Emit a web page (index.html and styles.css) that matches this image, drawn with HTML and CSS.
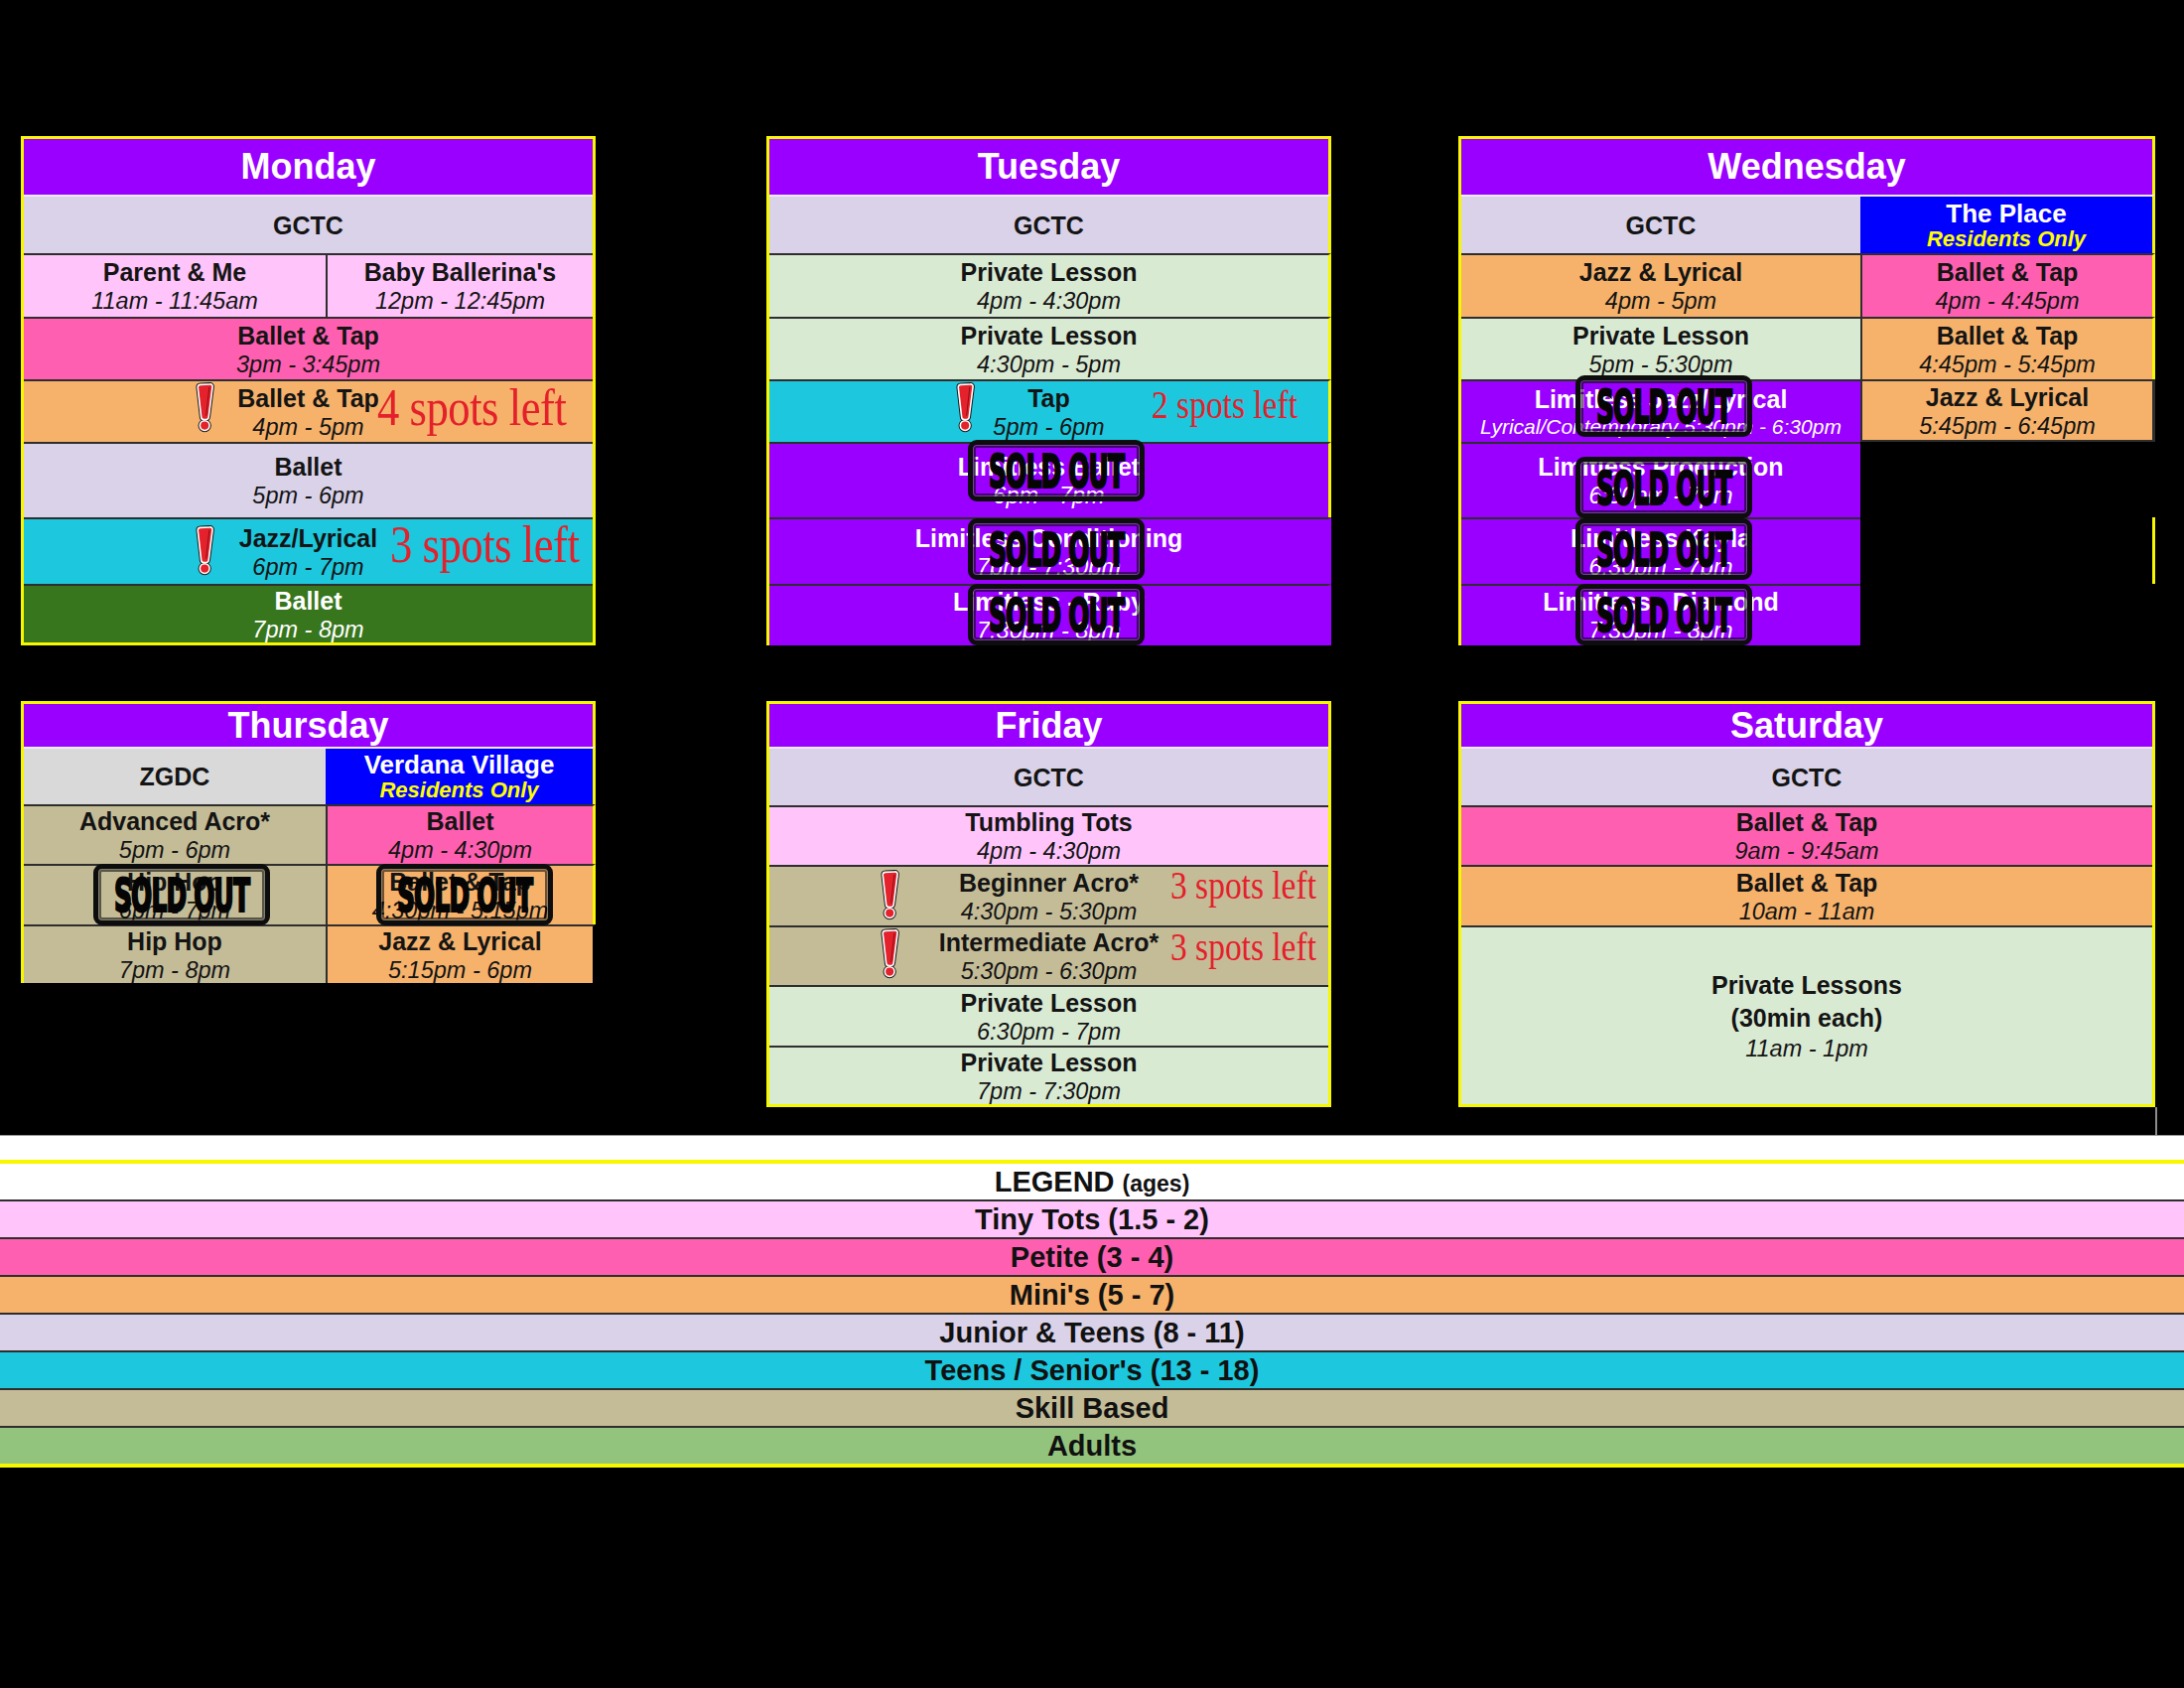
FILE: index.html
```html
<!DOCTYPE html>
<html lang="en">
<head>
<meta charset="utf-8">
<title>Weekly Class Schedule</title>
<link rel="stylesheet" href="styles.css">
</head>
<body>
<svg class="defs" aria-hidden="true">
  <defs>
    <symbol id="bang" viewBox="0 0 26 64">
      <path d="M5 6C5 4.6 6 3.9 7.4 3.8L19.2 3.2C20.6 3.1 21.6 4.1 21.4 5.5L16.6 43C16.4 44.4 15.5 45.2 14.1 45.2L11.6 45.2C10.2 45.2 9.3 44.3 9.2 42.9Z" fill="none" stroke="#1a1a1a" stroke-width="6.5" stroke-linejoin="round"/>
      <circle cx="12.6" cy="53.8" r="5" fill="none" stroke="#1a1a1a" stroke-width="6.5"/>
      <path d="M5 6C5 4.6 6 3.9 7.4 3.8L19.2 3.2C20.6 3.1 21.6 4.1 21.4 5.5L16.6 43C16.4 44.4 15.5 45.2 14.1 45.2L11.6 45.2C10.2 45.2 9.3 44.3 9.2 42.9Z" fill="none" stroke="#ffffff" stroke-width="4" stroke-linejoin="round"/>
      <circle cx="12.6" cy="53.8" r="5" fill="none" stroke="#ffffff" stroke-width="4"/>
      <path d="M5 6C5 4.6 6 3.9 7.4 3.8L19.2 3.2C20.6 3.1 21.6 4.1 21.4 5.5L16.6 43C16.4 44.4 15.5 45.2 14.1 45.2L11.6 45.2C10.2 45.2 9.3 44.3 9.2 42.9Z" fill="#e5222c"/>
      <circle cx="12.6" cy="53.8" r="5" fill="#e5222c"/>
      <path d="M18.4 5.6L14.4 41.6" stroke="#7a0d12" stroke-width="1.1" fill="none"/>
    </symbol>
  </defs>
</svg>

<main class="week">
  <!-- Monday -->
  <section class="day mon">
    <div class="hd span2">Monday</div>
    <div class="c c2 lav span2"><span class="n">GCTC</span></div>
    <div class="c tiny"><span class="n">Parent &amp; Me</span><span class="t">11am - 11:45am</span></div>
    <div class="c tiny sl"><span class="n">Baby Ballerina's</span><span class="t">12pm - 12:45pm</span></div>
    <div class="c pink span2"><span class="n">Ballet &amp; Tap</span><span class="t">3pm - 3:45pm</span></div>
    <div class="c orange span2">
      <svg class="bang b-m1"><use href="#bang"/></svg>
      <span class="n">Ballet &amp; Tap</span><span class="t">4pm - 5pm</span>
      <span class="spots sp-m1">4 spots left</span>
    </div>
    <div class="c lav span2"><span class="n">Ballet</span><span class="t">5pm - 6pm</span></div>
    <div class="c cyan span2">
      <svg class="bang b-m2"><use href="#bang"/></svg>
      <span class="n">Jazz/Lyrical</span><span class="t">6pm - 7pm</span>
      <span class="spots sp-m2">3 spots left</span>
    </div>
    <div class="c dgreen w span2"><span class="n">Ballet</span><span class="t">7pm - 8pm</span></div>
  </section>

  <!-- Tuesday -->
  <section class="day tue">
    <div class="hd yr">Tuesday</div>
    <div class="c c2 lav yr"><span class="n">GCTC</span></div>
    <div class="c lgreen yr"><span class="n">Private Lesson</span><span class="t">4pm - 4:30pm</span></div>
    <div class="c lgreen yr"><span class="n">Private Lesson</span><span class="t">4:30pm - 5pm</span></div>
    <div class="c cyan yr">
      <svg class="bang b-tu"><use href="#bang"/></svg>
      <span class="n">Tap</span><span class="t">5pm - 6pm</span>
      <span class="spots sp-tu">2 spots left</span>
    </div>
    <div class="c purple w yr">
      <span class="n">Limitless Ballet</span><span class="t">6pm - 7pm</span>
      <div class="stamp st-t1"><span>SOLD OUT</span></div>
    </div>
    <div class="c purple w pr">
      <span class="n">Limitless Conditioning</span><span class="t">7pm - 7:30pm</span>
      <div class="stamp st-t2"><span>SOLD OUT</span></div>
    </div>
    <div class="c purple w pr">
      <span class="n">Limitless - Ruby</span><span class="t">7:30pm - 8pm</span>
      <div class="stamp st-t3"><span>SOLD OUT</span></div>
    </div>
  </section>

  <!-- Wednesday -->
  <section class="day wed">
    <div class="hd span2 yr">Wednesday</div>
    <div class="c c2 lav"><span class="n">GCTC</span></div>
    <div class="c c2 blue yr"><span class="n">The Place</span><span class="res">Residents Only</span></div>
    <div class="c orange"><span class="n">Jazz &amp; Lyrical</span><span class="t">4pm - 5pm</span></div>
    <div class="c pink sl yr"><span class="n">Ballet &amp; Tap</span><span class="t">4pm - 4:45pm</span></div>
    <div class="c lgreen"><span class="n">Private Lesson</span><span class="t">5pm - 5:30pm</span></div>
    <div class="c orange sl yr"><span class="n">Ballet &amp; Tap</span><span class="t">4:45pm - 5:45pm</span></div>
    <div class="c purple w">
      <span class="n">Limitless Jazz/Lyrical</span><span class="sub">Lyrical/Contemporary 5:30pm - 6:30pm</span>
      <div class="stamp st-w1"><span>SOLD OUT</span></div>
    </div>
    <div class="c orange sl dr"><span class="n">Jazz &amp; Lyrical</span><span class="t">5:45pm - 6:45pm</span></div>
    <div class="c purple w">
      <span class="n">Limitless Production</span><span class="t">6:30pm - 7pm</span>
      <div class="stamp st-w2"><span>SOLD OUT</span></div>
    </div>
    <div class="e"></div>
    <div class="c purple w">
      <span class="n">Limitless Kayla</span><span class="t">6:30pm - 7pm</span>
      <div class="stamp st-w3"><span>SOLD OUT</span></div>
    </div>
    <div class="e yr"></div>
    <div class="c purple w">
      <span class="n">Limitless - Diamond</span><span class="t">7:30pm - 8pm</span>
      <div class="stamp st-w4"><span>SOLD OUT</span></div>
    </div>
    <div class="e"></div>
  </section>

  <!-- Thursday -->
  <section class="day thu">
    <div class="hd span2 yr">Thursday</div>
    <div class="c c2 grey"><span class="n">ZGDC</span></div>
    <div class="c c2 blue yr"><span class="n">Verdana Village</span><span class="res">Residents Only</span></div>
    <div class="c khaki"><span class="n">Advanced Acro*</span><span class="t">5pm - 6pm</span></div>
    <div class="c pink sl yr"><span class="n">Ballet</span><span class="t">4pm - 4:30pm</span></div>
    <div class="c khaki">
      <span class="n">Hip Hop</span><span class="t">6pm - 7pm</span>
      <div class="stamp st-h1"><span>SOLD OUT</span></div>
    </div>
    <div class="c orange sl yr">
      <span class="n">Ballet &amp; Tap</span><span class="t">4:30pm - 5:15pm</span>
      <div class="stamp st-h2"><span>SOLD OUT</span></div>
    </div>
    <div class="c khaki"><span class="n">Hip Hop</span><span class="t">7pm - 8pm</span></div>
    <div class="c orange sl kr"><span class="n">Jazz &amp; Lyrical</span><span class="t">5:15pm - 6pm</span></div>
  </section>

  <!-- Friday -->
  <section class="day fri">
    <div class="hd">Friday</div>
    <div class="c c2 lav"><span class="n">GCTC</span></div>
    <div class="c tiny"><span class="n">Tumbling Tots</span><span class="t">4pm - 4:30pm</span></div>
    <div class="c khaki">
      <svg class="bang b-f1"><use href="#bang"/></svg>
      <span class="n">Beginner Acro*</span><span class="t">4:30pm - 5:30pm</span>
      <span class="spots sp-f1">3 spots left</span>
    </div>
    <div class="c khaki">
      <svg class="bang b-f2"><use href="#bang"/></svg>
      <span class="n">Intermediate Acro*</span><span class="t">5:30pm - 6:30pm</span>
      <span class="spots sp-f2">3 spots left</span>
    </div>
    <div class="c lgreen"><span class="n">Private Lesson</span><span class="t">6:30pm - 7pm</span></div>
    <div class="c lgreen"><span class="n">Private Lesson</span><span class="t">7pm - 7:30pm</span></div>
  </section>

  <!-- Saturday -->
  <section class="day sat">
    <div class="hd">Saturday</div>
    <div class="c c2 lav"><span class="n">GCTC</span></div>
    <div class="c pink"><span class="n">Ballet &amp; Tap</span><span class="t">9am - 9:45am</span></div>
    <div class="c orange"><span class="n">Ballet &amp; Tap</span><span class="t">10am - 11am</span></div>
    <div class="c lgreen big"><span class="n">Private Lessons</span><span class="n">(30min each)</span><span class="t">11am - 1pm</span></div>
  </section>
</main>

<div class="tail"><div class="tick"></div></div>

<section class="legend">
  <div class="lg-top"></div>
  <div class="lg lg-title"><span>LEGEND <small>(ages)</small></span></div>
  <div class="lg tiny">Tiny Tots (1.5 - 2)</div>
  <div class="lg pink">Petite (3 - 4)</div>
  <div class="lg orange">Mini's (5 - 7)</div>
  <div class="lg lav">Junior &amp; Teens (8 - 11)</div>
  <div class="lg cyan">Teens / Senior's (13 - 18)</div>
  <div class="lg khaki">Skill Based</div>
  <div class="lg adult">Adults</div>
</section>
</body>
</html>
```

FILE: styles.css
```css
* { box-sizing: border-box; margin: 0; padding: 0; }

html { background: #000; }

body {
  width: 2200px;
  height: 1700px;
  background: #000;
  font-family: "Liberation Sans", Arial, Helvetica, sans-serif;
  color: #141414;
  overflow: hidden;
}

.defs { position: absolute; width: 0; height: 0; overflow: hidden; }

/* ---------- week grid ---------- */
.week {
  display: grid;
  grid-template-columns: 579px 172px 569px 128px 702px;
  grid-template-rows: 513px 409px;
  row-gap: 56px;
  align-items: start;
  padding: 137px 0 0 21px;
}

.mon { grid-area: 1 / 1; }
.tue { grid-area: 1 / 3; }
.wed { grid-area: 1 / 5; }
.thu { grid-area: 2 / 1; }
.fri { grid-area: 2 / 3; }
.sat { grid-area: 2 / 5; }

.day {
  display: grid;
  border: 3px solid #f7f700;
}

.mon, .thu { grid-template-columns: 304px 1fr; }
.wed { grid-template-columns: 402px 1fr; }
.tue, .fri, .sat { grid-template-columns: 1fr; }

.mon { grid-template-rows: 56px 59px 64px 63px 63px 76px 67px 59px; }
.tue, .wed {
  grid-template-rows: 56px 59px 64px 63px 63px 76px 67px 62px;
  border-right: 0;
  border-bottom: 0;
}
.thu {
  grid-template-rows: 43px 58px 60px 61px 59px;
  border-right: 0;
  border-bottom: 0;
}
.fri { grid-template-rows: 43px 59px 60px 61px 60px 61px 59px; }
.sat { grid-template-rows: 43px 59px 60px 61px 180px; }

.span2 { grid-column: 1 / -1; }

.hd {
  background: #9900ff;
  color: #fff;
  font-weight: 700;
  font-size: 36px;
  line-height: 1;
  display: flex;
  align-items: center;
  justify-content: center;
}

.c {
  position: relative;
  display: flex;
  flex-direction: column;
  align-items: center;
  justify-content: center;
  text-align: center;
  white-space: nowrap;
  border-top: 2px solid #2e2e2e;
}
.c2 { border-top-color: #eeeaf6; }
.sl { border-left: 2px solid #2e2e2e; }
.yr { border-right: 3px solid #f7f700; }
.pr { border-right: 3px solid #9900ff; }
.dr { border-right: 3px solid #2e2e2e; border-bottom: 2px solid #2e2e2e; }
.kr { border-right: 3px solid #000; }
.e { background: #000; }

.n { font-weight: 700; font-size: 25px; line-height: 30px; }
.t { font-style: italic; font-size: 23.5px; line-height: 28px; }
.sub { font-style: italic; font-size: 21px; line-height: 26px; }
.res { font-style: italic; font-weight: 700; font-size: 22px; line-height: 24px; color: #ffff00; }
.blue .n { color: #fff; font-size: 26px; line-height: 28px; }
.big .n { line-height: 33px; }
.w { color: #fff; }

/* ---------- colours ---------- */
.lav { background: #d9d2e9; }
.tiny { background: #ffc5fb; }
.pink { background: #ff5fb0; }
.orange { background: #f6b26b; }
.cyan { background: #1dc8de; }
.dgreen { background: #38761d; }
.lgreen { background: #d9ead3; }
.khaki { background: #c4bc97; }
.grey { background: #d9d9d9; }
.blue { background: #0000ff; }
.purple { background: #9900ff; }
.adult { background: #93c47d; }

/* ---------- overlays ---------- */
.bang {
  position: absolute;
  z-index: 4;
  width: 21px;
  height: 52px;
}
.b-m1 { left: 172px; top: 1px; }
.b-m2 { left: 172px; top: 6px; }
.b-tu { left: 187px; top: 1px; }
.b-f1 { left: 111px; top: 3px; }
.b-f2 { left: 111px; top: 1px; }

.spots {
  position: absolute;
  z-index: 4;
  font-family: "Liberation Serif", "Times New Roman", serif;
  color: #e4202b;
  line-height: 1;
  white-space: nowrap;
  transform-origin: left center;
  transform: scale(0.93, 1.12);
}
.sp-m1 { font-size: 48px; left: 356px; top: 2px; letter-spacing: -0.5px; }
.sp-m2 { font-size: 48px; left: 369px; top: 1px; letter-spacing: -0.5px; }
.sp-tu { font-size: 36px; left: 385px; top: 6px; }
.sp-f1 { font-size: 36px; left: 404px; top: 1px; }
.sp-f2 { font-size: 36px; left: 404px; top: 2px; }

.stamp {
  position: absolute;
  z-index: 5;
  width: 178px;
  height: 62px;
  border: 5px solid #0d0d0d;
  border-radius: 9px;
  box-shadow: inset 0 0 0 1px rgba(255, 255, 255, 0.25), inset 0 0 0 3px rgba(0, 0, 0, 0.55);
  display: flex;
  align-items: center;
  justify-content: center;
}
.stamp span {
  font-family: "Liberation Sans Narrow", "DejaVu Sans Condensed", "Liberation Sans", sans-serif;
  font-weight: 700;
  font-size: 33px;
  line-height: 1;
  color: #050505;
  letter-spacing: -1px;
  -webkit-text-stroke: 1.6px #050505;
  transform: scale(0.84, 1.4);
}
.st-t1 { left: 200px; top: -4px; }
.st-t2 { left: 200px; top: -1px; }
.st-t3 { left: 200px; top: -2px; }
.st-w1 { left: 115px; top: -6px; }
.st-w2 { left: 115px; top: 13px; }
.st-w3 { left: 115px; top: -1px; }
.st-w4 { left: 115px; top: -2px; }
.st-h1 { left: 70px; top: -2px; }
.st-h2 { left: 49px; top: -2px; }

/* ---------- legend ---------- */
.tail {
  height: 28px;
  display: flex;
  justify-content: flex-end;
  padding-right: 27px;
}
.tick { width: 2px; height: 100%; background: #8c8c8c; }

.legend { border-bottom: 4px solid #f7f700; }
.lg-top {
  height: 29px;
  background: #fff;
  border-top: 1px solid #9a9a9a;
  border-bottom: 4px solid #f7f700;
}
.lg {
  height: 38px;
  border-top: 2px solid #2e2e2e;
  display: flex;
  align-items: center;
  justify-content: center;
  font-weight: 700;
  font-size: 29px;
  color: #111;
}
.lg-title { height: 36px; border-top: 0; background: #fff; }
.lg-title small { font-size: 23px; }
```
